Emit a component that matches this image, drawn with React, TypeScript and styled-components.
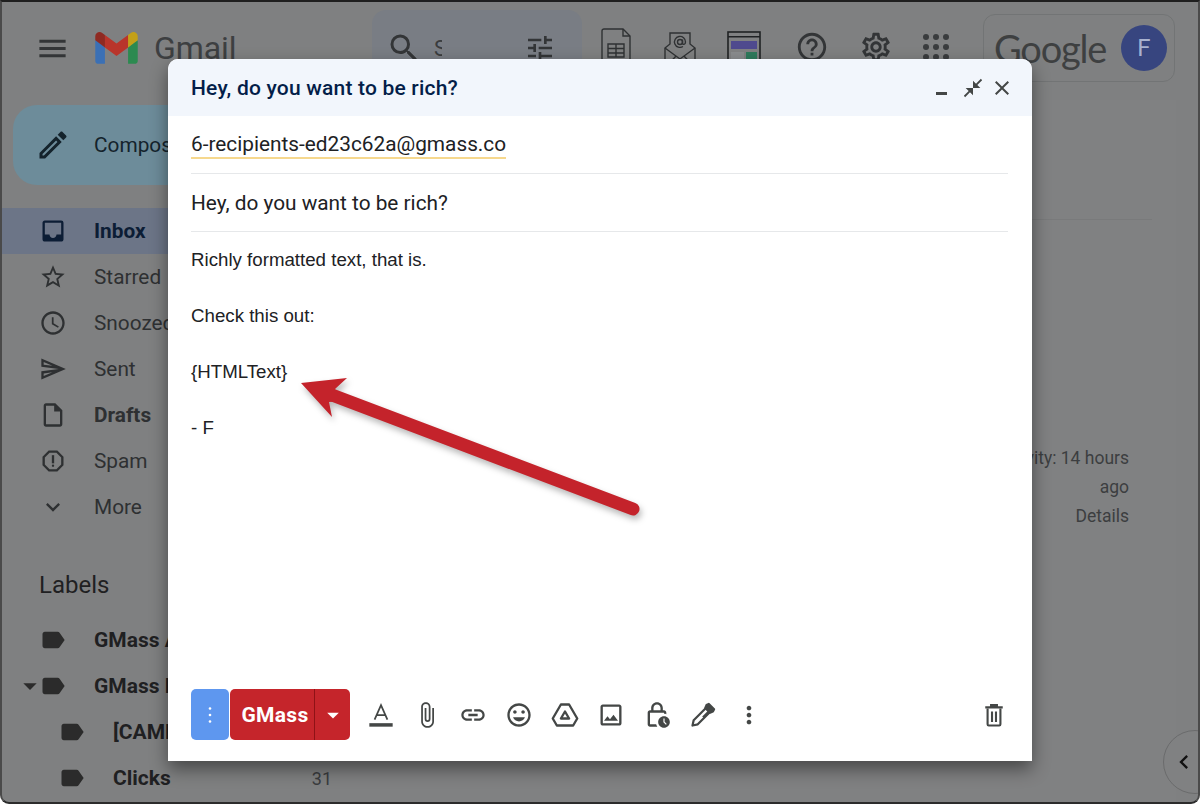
import React from "react";
import styled, { createGlobalStyle } from "styled-components";
import {
    MdAccessTime,
    MdArrowDropDown,
    MdChevronLeft,
    MdClose,
    MdCloseFullscreen,
    MdExpandMore,
    MdHelpOutline,
    MdInbox,
    MdLabel,
    MdLink,
    MdMenu,
    MdMoreVert,
    MdOutlineAttachFile,
    MdOutlineEdit,
    MdOutlineImage,
    MdOutlineInsertDriveFile,
    MdOutlineInsertEmoticon,
    MdOutlineLockClock,
    MdOutlineReport,
    MdOutlineSend,
    MdOutlineSettings,
    MdSearch,
    MdStarBorder,
    MdTune,
} from "react-icons/md";

const GlobalStyle = createGlobalStyle`
    html, body {
        margin: 0;
        padding: 0;
        background: #ffffff;
    }

    * {
        box-sizing: border-box;
    }
`;

const Frame = styled.div`
    position: relative;
    width: 1200px;
    height: 804px;
    overflow: hidden;
    display: flex;
    flex-direction: column;
    background-color: #7f8081;
    border-top: 2px solid #1f1f1f;
    border-left: 2px solid #4a4a4a;
    border-right: 2px solid #4a4a4a;
    border-bottom: 2px solid #2c2c2c;
    border-radius: 0 0 9px 9px;
    font-family: Roboto, "Liberation Sans", sans-serif;
`;

const TopBar = styled.header`
    flex: 0 0 92px;
    display: flex;
    align-items: center;
    padding-left: 33px;
    color: #333537;

    & > * {
        flex-shrink: 0;
    }
`;

const Brand = styled.div`
    display: flex;
    align-items: center;
    margin-left: 25px;
    width: 277px;
`;

const BrandName = styled.span`
    margin-left: 16px;
    font-size: 32px;
    letter-spacing: -0.1px;
    color: #3d3f41;
`;

const SearchBox = styled.div`
    display: flex;
    align-items: center;
    width: 210px;
    height: 76px;
    padding-left: 14px;
    background-color: #797d84;
    border-radius: 14px;
`;

const SearchHint = styled.span`
    width: 8px;
    margin-left: 12px;
    overflow: hidden;
    font-size: 22px;
    color: #3a3c3e;
`;

const SearchTune = styled.span`
    display: flex;
    margin-left: 82px;
`;

const AddOnIcons = styled.div`
    display: flex;
    align-items: flex-start;
    margin-left: 2px;
`;

const AddOnSlot = styled.span<{ $width: number; $top?: number }>`
    display: flex;
    justify-content: center;
    width: ${p => p.$width}px;
    padding-top: ${p => p.$top ?? 0}px;
`;

const AccountPill = styled.div`
    display: flex;
    align-items: center;
    justify-content: space-between;
    margin-left: 15px;
    width: 192px;
    height: 68px;
    padding: 0 7px 0 10px;
    border: 1px solid #727475;
    border-radius: 12px;
`;

const GoogleWord = styled.span`
    font-family: Lato, Roboto, sans-serif;
    font-size: 38px;
    letter-spacing: -1.2px;
    color: #3e4041;
`;

const Avatar = styled.span`
    display: flex;
    align-items: center;
    justify-content: center;
    width: 46px;
    height: 46px;
    border-radius: 50%;
    background-color: #37457f;
    color: #a9b2cf;
    font-size: 24px;
`;

const Columns = styled.div`
    flex: 1;
    display: flex;
    min-height: 0;
`;

const Sidebar = styled.aside`
    flex: 0 0 338px;
    padding-top: 11px;
`;

const ComposeButton = styled.div`
    display: flex;
    align-items: center;
    gap: 23px;
    width: 240px;
    height: 80px;
    margin-left: 11px;
    margin-bottom: 23px;
    padding-left: 22px;
    background-color: #6d8c9a;
    border-radius: 24px;
    color: #14232c;
    font-size: 20.8px;
`;

const NavRow = styled.div<{ $active?: boolean; $bold?: boolean }>`
    display: flex;
    align-items: center;
    gap: 27px;
    height: 46px;
    padding-left: 37px;
    font-size: 20.8px;
    font-weight: ${p => (p.$bold ? 700 : 400)};
    color: ${p => (p.$active ? "#0c1d35" : "#2e3032")};
    background-color: ${p => (p.$active ? "#6c7587" : "transparent")};
`;

const LabelsTitle = styled.div`
    height: 34px;
    margin: 38px 0 15px 37px;
    font-size: 24px;
    line-height: 34px;
    color: #1f2022;
`;

const LabelRow = styled.div<{ $indent: number }>`
    display: flex;
    align-items: center;
    height: 46px;
    padding-left: ${p => p.$indent}px;
    padding-right: 8px;
    font-size: 21px;
    font-weight: 700;
    color: #1f2022;
`;

const CaretSlot = styled.span`
    display: flex;
    justify-content: center;
    width: 19px;
    color: #2b2b2b;

    & > svg {
        flex: none;
    }
`;

const LabelName = styled.span`
    margin-left: 27px;
    white-space: nowrap;
`;

const LabelCount = styled.span`
    margin-left: auto;
    font-size: 18px;
    font-weight: 400;
    color: #3a3c3e;
`;

const MailPanel = styled.main`
    flex: 1;
    display: flex;
    flex-direction: column;
    margin: 6px 22px 0 0;
    padding-top: 119px;
    color: #3c3e40;
    background-color: #808182;
`;

const Rule = styled.div`
    height: 1px;
    margin-right: 24px;
    background-color: #797a7b;
`;

const ActivityText = styled.div`
    width: 340px;
    margin: 224px 0 0 auto;
    padding-right: 47px;
    font-size: 17.5px;
    line-height: 29px;
    text-align: right;
`;

const PanelToggle = styled.div`
    position: absolute;
    right: -29px;
    bottom: 8px;
    display: flex;
    align-items: center;
    width: 64px;
    height: 64px;
    padding-left: 6px;
    border: 1px solid #6a6b6c;
    border-radius: 50%;
    color: #111111;
    background-color: #808182;
`;

const ComposeWindow = styled.section`
    position: absolute;
    left: 166px;
    top: 57px;
    width: 864px;
    height: 702px;
    display: flex;
    flex-direction: column;
    background-color: #ffffff;
    border-radius: 10px 10px 0 0;
    box-shadow: 0 8px 18px rgba(0, 0, 0, 0.45);
`;

const ComposeHeader = styled.div`
    flex: 0 0 57px;
    display: flex;
    align-items: center;
    padding: 0 18px 0 23px;
    background-color: #f2f6fc;
    border-radius: 10px 10px 0 0;
`;

const ComposeTitle = styled.span`
    font-size: 21px;
    font-weight: 500;
    letter-spacing: 0.2px;
    color: #041e49;
`;

const WindowControls = styled.div`
    display: flex;
    align-items: center;
    gap: 6px;
    margin-left: auto;
    color: #444746;
`;

const MinimizeBar = styled.span`
    width: 11px;
    height: 3px;
    margin: 11px 9px 0 0;
    background-color: #444746;
`;

const FieldRow = styled.div`
    display: flex;
    align-items: center;
    height: 58px;
    margin: 0 24px 0 23px;
    border-bottom: 1px solid #e6e8ea;
    font-size: 20.8px;
    color: #202124;
`;

const Recipient = styled.span`
    margin-top: 1px;
    border-bottom: 2px solid #f6d88e;
    line-height: 25px;
`;

const MessageBody = styled.div`
    flex: 1;
    padding: 13.5px 23px 0;
    font-family: "Liberation Sans", Arial, sans-serif;
    font-size: 18.7px;
    line-height: 28.15px;
    color: #202124;
`;

const MessageLine = styled.div`
    min-height: 28.15px;
`;

const Toolbar = styled.div`
    display: flex;
    align-items: center;
    padding: 0 15px 21px 23px;
`;

const OptionsButton = styled.div`
    display: flex;
    align-items: center;
    justify-content: center;
    width: 38px;
    height: 51px;
    margin-right: 1px;
    background-color: #5e97ef;
    border-radius: 5px;
`;

const SendButton = styled.div`
    display: flex;
    align-items: stretch;
    width: 120px;
    height: 51px;
    margin-right: 8px;
    background-color: #c5252b;
    border-radius: 5px;
    color: #ffffff;
`;

const SendLabel = styled.span`
    flex: 1;
    display: flex;
    align-items: center;
    justify-content: center;
    padding-left: 6px;
    border-right: 1px solid #8f1216;
    font-size: 21px;
    font-weight: 700;
    letter-spacing: 0.3px;
`;

const SendCaret = styled.span`
    display: flex;
    align-items: center;
    justify-content: center;
    width: 35px;
`;

const ToolButton = styled.span<{ $end?: boolean }>`
    display: flex;
    align-items: center;
    justify-content: center;
    width: 46px;
    margin-left: ${p => (p.$end ? "auto" : "0")};
    color: #444746;
`;

const ArrowDrawing = styled.svg`
    position: absolute;
    left: 120px;
    top: 310px;
    width: 370px;
    height: 160px;
    filter: drop-shadow(2px 4px 3px rgba(0, 0, 0, 0.28));
`;

const GmailMark: React.FC = () => (
    <svg width="43" height="32" viewBox="0 0 256 193">
        <path fill="#3b70b5" d="M58.18 192.05V93.14L27.5 65.08 0 49.5v125.09c0 9.66 7.83 17.46 17.45 17.46h40.73z" />
        <path fill="#2c8a50" d="M197.82 192.05h40.73c9.66 0 17.45-7.83 17.45-17.46V49.5l-31.16 17.84-27.02 25.8v98.91z" />
        <path fill="#b9352b" d="M58.18 93.14l-4.17-38.65 4.17-36.99L128 69.87l69.82-52.37 4.67 35-4.67 40.64L128 145.5z" />
        <path fill="#c4a018" d="M197.82 17.5v75.64L256 49.5V26.23c0-21.58-24.64-33.88-41.89-20.94l-16.29 12.21z" />
        <path fill="#8f2a22" d="M0 49.5l26.76 20.07 31.42 23.57V17.5L41.89 5.29C24.61-7.65 0 4.65 0 26.23V49.5z" />
    </svg>
);

const SheetIcon: React.FC = () => (
    <svg width="30" height="38" viewBox="0 0 30 38" fill="none" stroke="#2f3133" strokeWidth="1.4">
        <path d="M3 1h19l7 7v27a2 2 0 0 1-2 2H3a2 2 0 0 1-2-2V3a2 2 0 0 1 2-2z" />
        <path d="M22 1v7h7" />
        <path d="M7 16h16v13H7zM7 20.500h16M7 25h16M15 16v13" />
    </svg>
);

const MailMergeIcon: React.FC = () => (
    <svg width="32" height="38" viewBox="0 0 32 38" fill="none" stroke="#2f3133" strokeWidth="1.4">
        <path d="M1 17l5-4V2h20v11l5 4v20H1z" />
        <path d="M1 17l15 11 15-11M1 37l11-12M31 37L20 25" />
        <circle cx="16" cy="11" r="2.500" />
        <path d="M18.500 8.500v3.500c0 2 3 2 3-1a5.500 5.500 0 1 0-2.500 4.500" />
    </svg>
);

const TemplateIcon: React.FC = () => (
    <svg width="34" height="38" viewBox="0 0 34 38">
        <rect x="1" y="1" width="32" height="36" fill="#808182" stroke="#202224" strokeWidth="1.6" />
        <rect x="1" y="5" width="32" height="1.500" fill="#202224" />
        <rect x="4" y="10" width="26" height="8" fill="#4f4a8e" />
        <rect x="4" y="21" width="13" height="15" fill="#8a8c8e" />
        <rect x="19" y="21" width="11" height="15" fill="#2f7a5c" />
    </svg>
);

const AppsIcon: React.FC = () => (
    <svg width="30" height="30" viewBox="0 0 30 30" fill="#3a3c3e">
        {[5, 15, 25].map(y =>
            [5, 15, 25].map(x => <circle key={`${x}-${y}`} cx={x} cy={y} r="3" />)
        )}
    </svg>
);

const FontColorIcon: React.FC = () => (
    <svg width="28" height="28" viewBox="0 0 24 24" fill="none" stroke="#444746" strokeWidth="1.500">
        <path d="M6.500 16L12 3.500 17.500 16M8.300 12h7.400" />
        <path d="M2 20.500h20" strokeWidth="3" />
    </svg>
);

const DriveIcon: React.FC = () => (
    <svg width="28" height="28" viewBox="0 0 24 24" fill="none" stroke="#444746" strokeWidth="2" strokeLinejoin="round">
        <path d="M8.500 3h7l7 12-3.500 6H5l-3.500-6z" />
        <path d="M12 9l3.500 6h-7z" />
    </svg>
);

const PenIcon: React.FC = () => (
    <svg width="28" height="28" viewBox="0 0 24 24" fill="none" stroke="#444746" strokeWidth="1.900" strokeLinejoin="round">
        <path d="M3 21l1-4.500L14.500 6l3.500 3.500L7.500 20z" />
        <path d="M15 3.500l2-1 4.500 4.500-1 2-2.500 1-4-4z" fill="#444746" />
        <path d="M17 9l-5 5" />
    </svg>
);

const TrashIcon: React.FC = () => (
    <svg width="28" height="28" viewBox="0 0 24 24" fill="none" stroke="#444746" strokeWidth="1.800">
        <path d="M6.500 6.500V20a1 1 0 0 0 1 1h9a1 1 0 0 0 1-1V6.500" />
        <path d="M4.500 5.500h15M9.500 5.500V3.500h5v2" />
        <path d="M10.300 9v9M13.700 9v9" />
    </svg>
);

const VerticalDots: React.FC = () => (
    <svg width="6" height="18" viewBox="0 0 6 18" fill="#ffffff">
        <circle cx="3" cy="2.500" r="1.300" />
        <circle cx="3" cy="9" r="1.300" />
        <circle cx="3" cy="15.500" r="1.300" />
    </svg>
);

const navigation = [
    { name: "Inbox", icon: <MdInbox size={28} />, active: true, bold: true },
    { name: "Starred", icon: <MdStarBorder size={28} /> },
    { name: "Snoozed", icon: <MdAccessTime size={28} /> },
    { name: "Sent", icon: <MdOutlineSend size={28} /> },
    { name: "Drafts", icon: <MdOutlineInsertDriveFile size={28} />, bold: true },
    { name: "Spam", icon: <MdOutlineReport size={28} /> },
    { name: "More", icon: <MdExpandMore size={28} /> },
];

const labels = [
    { name: "GMass Auto Followup", indent: 18 },
    { name: "GMass Reports", indent: 18, open: true },
    { name: "[CAMPAIGN]", indent: 37 },
    { name: "Clicks", indent: 37, count: 31 },
];

const messageLines = [
    "Richly formatted text, that is.",
    "",
    "Check this out:",
    "",
    "{HTMLText}",
    "",
    "- F",
];

const tools = [
    <FontColorIcon key="format" />,
    <MdOutlineAttachFile key="attach" size={28} />,
    <MdLink key="link" size={28} />,
    <MdOutlineInsertEmoticon key="emoji" size={28} />,
    <DriveIcon key="drive" />,
    <MdOutlineImage key="image" size={28} />,
    <MdOutlineLockClock key="lock" size={28} />,
    <PenIcon key="pen" />,
    <MdMoreVert key="more" size={28} />,
];

export default function App() {
    return (
        <Frame>
            <GlobalStyle />
            <TopBar>
                <MdMenu size={35} />
                <Brand>
                    <GmailMark />
                    <BrandName>Gmail</BrandName>
                </Brand>
                <SearchBox>
                    <MdSearch size={36} />
                    <SearchHint>S</SearchHint>
                    <SearchTune>
                        <MdTune size={32} />
                    </SearchTune>
                </SearchBox>
                <AddOnIcons>
                    <AddOnSlot $width={64}>
                        <SheetIcon />
                    </AddOnSlot>
                    <AddOnSlot $width={64} $top={3}>
                        <MailMergeIcon />
                    </AddOnSlot>
                    <AddOnSlot $width={64} $top={3}>
                        <TemplateIcon />
                    </AddOnSlot>
                    <AddOnSlot $width={72} $top={2}>
                        <MdHelpOutline size={34} />
                    </AddOnSlot>
                    <AddOnSlot $width={56} $top={2}>
                        <MdOutlineSettings size={34} />
                    </AddOnSlot>
                    <AddOnSlot $width={64} $top={4}>
                        <AppsIcon />
                    </AddOnSlot>
                </AddOnIcons>
                <AccountPill>
                    <GoogleWord>Google</GoogleWord>
                    <Avatar>F</Avatar>
                </AccountPill>
            </TopBar>
            <Columns>
                <Sidebar>
                    <ComposeButton>
                        <MdOutlineEdit size={36} />
                        Compose
                    </ComposeButton>
                    {navigation.map(item => (
                        <NavRow key={item.name} $active={item.active} $bold={item.bold}>
                            {item.icon}
                            {item.name}
                        </NavRow>
                    ))}
                    <LabelsTitle>Labels</LabelsTitle>
                    {labels.map(label => (
                        <LabelRow key={label.name} $indent={label.indent}>
                            <CaretSlot>{label.open && <MdArrowDropDown size={32} />}</CaretSlot>
                            <MdLabel size={28} color="#2b2b2b" />
                            <LabelName>{label.name}</LabelName>
                            {label.count && <LabelCount>{label.count}</LabelCount>}
                        </LabelRow>
                    ))}
                </Sidebar>
                <MailPanel>
                    <Rule />
                    <ActivityText>
                        Last account activity: 14 hours
                        <br />
                        ago
                        <br />
                        Details
                    </ActivityText>
                </MailPanel>
            </Columns>
            <PanelToggle>
                <MdChevronLeft size={28} />
            </PanelToggle>
            <ComposeWindow>
                <ComposeHeader>
                    <ComposeTitle>Hey, do you want to be rich?</ComposeTitle>
                    <WindowControls>
                        <MinimizeBar />
                        <MdCloseFullscreen size={22} />
                        <MdClose size={24} />
                    </WindowControls>
                </ComposeHeader>
                <FieldRow>
                    <Recipient>6-recipients-ed23c62a@gmass.co</Recipient>
                </FieldRow>
                <FieldRow>Hey, do you want to be rich?</FieldRow>
                <MessageBody>
                    {messageLines.map((line, index) => (
                        <MessageLine key={index}>{line}</MessageLine>
                    ))}
                </MessageBody>
                <Toolbar>
                    <OptionsButton>
                        <VerticalDots />
                    </OptionsButton>
                    <SendButton>
                        <SendLabel>GMass</SendLabel>
                        <SendCaret>
                            <MdArrowDropDown size={28} />
                        </SendCaret>
                    </SendButton>
                    {tools.map(tool => (
                        <ToolButton key={tool.key}>{tool}</ToolButton>
                    ))}
                    <ToolButton $end>
                        <TrashIcon />
                    </ToolButton>
                </Toolbar>
                <ArrowDrawing viewBox="0 0 370 160">
                    <path d="M44 26L345 140" stroke="#c4232b" strokeWidth="13" strokeLinecap="round" fill="none" />
                    <polygon points="13,14 59,9 47,20 52,32 41,33 44,48" fill="#c4232b" />
                </ArrowDrawing>
            </ComposeWindow>
        </Frame>
    );
}
